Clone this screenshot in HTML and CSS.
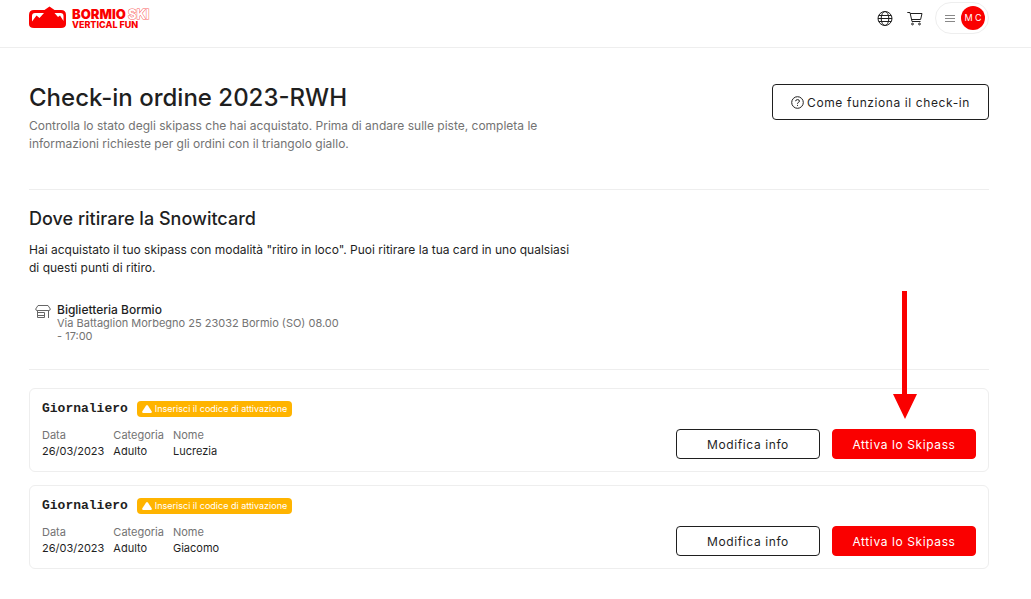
FILE: index.html
```html
<!DOCTYPE html>
<html lang="it">
<head>
<meta charset="utf-8">
<meta name="viewport" content="width=device-width, initial-scale=1">
<title>Check-in ordine 2023-RWH</title>
<link rel="stylesheet" href="styles.css">
</head>
<body>
<header class="topbar">
  <a class="logo" href="#" aria-label="Bormio Ski Vertical Fun">
    <svg width="124" height="22" viewBox="0 0 124 22" aria-hidden="true">
      <path class="logo-fill" fill-rule="evenodd" d="M5 3H15.500L20.500-.5L25.500 3H32Q37 3 37 8V17Q37 21 32 21H5Q0 21 0 17V8Q0 3 5 3ZM6 6Q3 6 3 9V14.500L7.500 8.500L10.500 11L15 6ZM25.500 6L29 10L31 8.500L34.500 14V9Q34.500 6 31.500 6Z"/>
      <text class="logo-name" x="43" y="12">BORMIO</text>
      <text class="logo-ski" x="99" y="12">SKI</text>
      <text class="logo-tag" x="43" y="21">VERTICAL FUN</text>
    </svg>
  </a>
  <nav class="tools" aria-label="Utente">
    <button class="icon-button" type="button" aria-label="Lingua">
      <svg class="line-icon" width="16" height="16" viewBox="0 0 16 16"><circle cx="8" cy="8.500" r="7"/><ellipse cx="8" cy="8.500" rx="3.800" ry="7"/><path d="M1.800 5.500H14.200M1 8.500H15M1.800 11.500H14.200"/></svg>
    </button>
    <button class="icon-button" type="button" aria-label="Carrello">
      <svg class="line-icon" width="16" height="16" viewBox="0 0 16 16"><path d="M.3 2.500H3L5 11.500H13.500M3.300 3.500H15L13.600 9.500H4.500"/><circle cx="5.500" cy="14" r=".9"/><circle cx="12.500" cy="14" r=".9"/></svg>
    </button>
    <button class="account" type="button" aria-label="Menu account">
      <svg class="menu-icon" width="10" height="9" viewBox="0 0 10 9"><path d="M0 1.500H10M0 4.500H10M0 7.500H10"/></svg>
      <span class="avatar">M C</span>
    </button>
  </nav>
</header>

<main class="page">
  <section class="intro">
    <div class="intro-text">
      <h1 class="title">Check-in ordine 2023-RWH</h1>
      <p class="lead">Controlla lo stato degli skipass che hai acquistato. Prima di andare sulle piste, completa le informazioni richieste per gli ordini con il triangolo giallo.</p>
    </div>
    <button class="button help" type="button">
      <svg class="line-icon" width="13" height="13" viewBox="0 0 13 13" aria-hidden="true"><circle cx="6.500" cy="6.500" r="5.800"/><path d="M4.600 5.200Q4.700 3.600 6.500 3.600Q8.400 3.600 8.400 5.100Q8.400 6.100 7.300 6.500Q6.500 6.800 6.500 7.700M6.500 8.900V9.900"/></svg>
      <span>Come funziona il check-in</span>
    </button>
  </section>

  <section class="pickup">
    <h2 class="subtitle">Dove ritirare la Snowitcard</h2>
    <p class="pickup-text">Hai acquistato il tuo skipass con modalità "ritiro in loco". Puoi ritirare la tua card in uno qualsiasi di questi punti di ritiro.</p>
    <div class="place">
      <svg class="shop-icon" width="16" height="13" viewBox="0 0 16 13" aria-hidden="true"><path d="M3 .5H13L15.300 4Q15.300 5.500 13.800 5.500H2.200Q.7 5.500 .7 4ZM2.500 5.500V12.500H9.500V7.500H3M3 10.500H9.500M13.500 5.500V13"/></svg>
      <div>
        <h3 class="place-name">Biglietteria Bormio</h3>
        <p class="place-address">Via Battaglion Morbegno 25 23032 Bormio (SO) 08.00 - 17:00</p>
      </div>
    </div>
  </section>

  <section class="passes" aria-label="Skipass">
    <article class="card">
      <div class="card-info">
        <div class="card-head">
          <h3 class="card-title">Giornaliero</h3>
          <span class="badge"><svg width="10" height="8" viewBox="0 0 10 8" aria-hidden="true"><path d="M4.100 .5Q5-.4 5.900 .5L9.800 6.500Q10 8 8.800 8H1.200Q0 8 .2 6.500Z"/></svg>Inserisci il codice di attivazione</span>
        </div>
        <dl class="details">
          <div><dt>Data</dt><dd>26/03/2023</dd></div>
          <div><dt>Categoria</dt><dd>Adulto</dd></div>
          <div><dt>Nome</dt><dd>Lucrezia</dd></div>
        </dl>
      </div>
      <div class="actions">
        <button class="button" type="button">Modifica info</button>
        <span class="target">
          <button class="button primary" type="button">Attiva lo Skipass</button>
          <svg class="arrow" width="26" height="128" viewBox="0 0 26 128" aria-hidden="true"><path d="M10 0H15V103H25L13 128L1 103H10Z"/></svg>
        </span>
      </div>
    </article>
    <article class="card">
      <div class="card-info">
        <div class="card-head">
          <h3 class="card-title">Giornaliero</h3>
          <span class="badge"><svg width="10" height="8" viewBox="0 0 10 8" aria-hidden="true"><path d="M4.100 .5Q5-.4 5.900 .5L9.800 6.500Q10 8 8.800 8H1.200Q0 8 .2 6.500Z"/></svg>Inserisci il codice di attivazione</span>
        </div>
        <dl class="details">
          <div><dt>Data</dt><dd>26/03/2023</dd></div>
          <div><dt>Categoria</dt><dd>Adulto</dd></div>
          <div><dt>Nome</dt><dd>Giacomo</dd></div>
        </dl>
      </div>
      <div class="actions">
        <button class="button" type="button">Modifica info</button>
        <button class="button primary" type="button">Attiva lo Skipass</button>
      </div>
    </article>
  </section>
</main>
</body>
</html>
```
FILE: styles.css
```css
* { box-sizing: border-box; }
body {
  margin: 0;
  background: #fff;
  color: #1f1f1f;
  font: 400 12px/18px Inter, "Liberation Sans", sans-serif;
}
h1, h2, h3, p, dl, dd { margin: 0; }
button { font: inherit; color: inherit; cursor: pointer; }
svg { display: block; flex: none; }

.topbar {
  display: flex;
  align-items: center;
  justify-content: space-between;
  padding: 2px 42px 13px 29px;
  border-bottom: 1px solid #eee;
}
.logo-fill, .logo-name, .logo-tag { fill: #fa0000; }
.logo svg { overflow: visible; }
.logo-name, .logo-ski, .logo-tag { font-family: Inter, sans-serif; font-weight: 900; }
.logo-name { font-size: 13px; }
.logo-ski { font-size: 13px; font-weight: 700; fill: #fff; stroke: #fa6060; stroke-width: 1px; paint-order: stroke; }
.logo-tag { font-size: 9px; font-weight: 800; }
.tools { display: flex; align-items: center; gap: 14px; }
.icon-button { padding: 0; border: 0; background: none; }
.line-icon { fill: none; stroke: #1f1f1f; stroke-width: 1px; }
.account {
  display: flex;
  align-items: center;
  gap: 6px;
  padding: 3px;
  padding-left: 9px;
  margin-left: -2px;
  border: 1px solid #eee;
  border-radius: 16px;
  background: #fff;
}
.menu-icon { stroke: #888; stroke-width: 1px; }
.avatar {
  width: 24px;
  border-radius: 50%;
  background: #fa0000;
  color: #fff;
  font-size: 9px;
  line-height: 24px;
  text-align: center;
}

.page { padding: 36px 42px 30px 29px; }
.intro {
  display: flex;
  justify-content: space-between;
  align-items: flex-start;
  gap: 24px;
  padding-bottom: 36px;
  border-bottom: 1px solid #eee;
}
.intro-text { max-width: 544px; }
.title { margin-bottom: 5px; font-size: 24px; line-height: 28px; font-weight: 500; }
.lead { color: #737373; }

.button {
  min-width: 144px;
  height: 30px;
  padding: 1px 18px 0;
  border: 1px solid #1f1f1f;
  border-radius: 4px;
  background: #fff;
  letter-spacing: 0.05em;
  white-space: nowrap;
}
.primary { border-color: #fa0000; background: #fa0000; color: #fff; }
.help { display: flex; align-items: center; gap: 3px; height: 36px; }

.pickup { padding: 17px 0 26px; border-bottom: 1px solid #eee; }
.subtitle { margin-bottom: 10px; font-size: 18px; line-height: 24px; font-weight: 500; }
.pickup-text { max-width: 544px; }
.place { display: flex; gap: 6px; max-width: 316px; margin-top: 25px; padding-left: 6px; }
.shop-icon { margin-top: 3px; fill: none; stroke: #666; stroke-width: 1px; }
.place-name { font-size: 12px; line-height: 15px; font-weight: 500; }
.place-address { color: #737373; font-size: 11px; line-height: 13px; }

.passes { display: grid; gap: 13px; margin-top: 18px; }
.card {
  display: flex;
  align-items: flex-end;
  justify-content: space-between;
  gap: 24px;
  padding: 12px;
  border: 1px solid #eee;
  border-radius: 6px;
}
.card-head { display: flex; align-items: center; gap: 9px; margin-bottom: 10px; }
.card-title { font: 700 13px/16px "Liberation Mono", monospace; }
.badge {
  display: flex;
  align-items: center;
  gap: 3px;
  padding: 0 5px;
  border-radius: 4px;
  background: #ffb400;
  color: #fff;
  font-size: 9px;
  line-height: 16px;
}
.badge svg { fill: #fff; }
.details { display: flex; gap: 9px; font-size: 11px; line-height: 16px; }
.details dt { color: #737373; }
.actions { display: flex; gap: 12px; }
.target { position: relative; display: flex; }
.arrow { position: absolute; right: 58px; bottom: 40px; fill: #fa0000; pointer-events: none; }
```
